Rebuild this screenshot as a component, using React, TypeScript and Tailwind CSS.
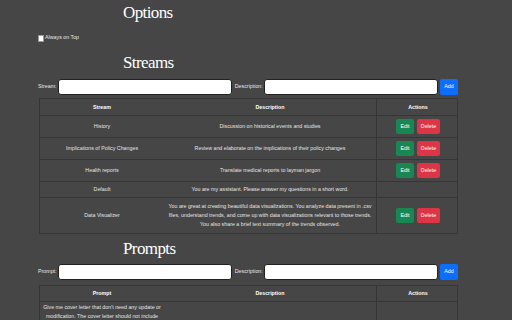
import React from 'react';

const sans = { fontFamily: '"Liberation Sans", Arial, sans-serif' };

type Stream = { name: string; lines: string[]; actions: boolean; h: string };

const streams: Stream[] = [
  { name: 'History', lines: ['Discussion on historical events and studies'], actions: true, h: 'h-[22px]' },
  { name: 'Implications of Policy Changes', lines: ['Review and elaborate on the implications of their policy changes'], actions: true, h: 'h-[22px]' },
  { name: 'Health reports', lines: ['Translate medical reports to layman jargon'], actions: true, h: 'h-[22px]' },
  { name: 'Default', lines: ['You are my assistant. Please answer my questions in a short word.'], actions: false, h: 'h-[16px]' },
  {
    name: 'Data Visualizer',
    lines: [
      'You are great at creating beautiful data visualizations. You analyze data present in .csv',
      'files, understand trends, and come up with data visualizations relevant to those trends.',
      'You also share a brief text summary of the trends observed.',
    ],
    actions: true,
    h: 'h-[36px]',
  },
];

function Title({ children }: { children: React.ReactNode }) {
  return (
    <div
      className="pl-[85px] text-[17px] leading-[17px] tracking-[-0.6px] text-white"
      style={{ fontFamily: '"Liberation Serif", "Times New Roman", serif' }}
    >
      {children}
    </div>
  );
}

function InputRow({ label }: { label: string }) {
  return (
    <div className="flex h-[16px] items-stretch gap-[1px] text-[5.3px] text-[#e6e6e6]">
      <span className="flex items-center">{label}:</span>
      <div className="flex-1 rounded-[3px] border border-[#222] bg-white" />
      <span className="ml-[2px] flex items-center">Description:</span>
      <div className="flex-1 rounded-[3px] border border-[#222] bg-white" />
      <button className="ml-[1px] w-[18px] rounded-[2px] bg-[#0d6efd] text-[5.3px] text-white">Add</button>
    </div>
  );
}

function Row({ h, header, children }: { h: string; header?: boolean; children: React.ReactNode[] }) {
  return (
    <div className={`grid grid-cols-[124px_212px_83px] border-b border-[#363636] ${h} ${header ? 'font-bold text-white' : 'text-[#e4e4e4]'}`}>
      <div className="flex items-center justify-center text-center">{children[0]}</div>
      <div className="flex items-center justify-center text-center">{children[1]}</div>
      <div className="flex items-center justify-center gap-[3px] border-l border-[#363636]">{children[2]}</div>
    </div>
  );
}

function Actions() {
  return (
    <>
      <button className="h-[15px] w-[18px] rounded-[2px] bg-[#198754] text-white">Edit</button>
      <button className="h-[15px] w-[23px] rounded-[2px] bg-[#dc3545] text-white">Delete</button>
    </>
  );
}

export default function App() {
  return (
    <div className="h-[320px] w-[512px] overflow-hidden bg-[#464646]" style={sans}>
      <div className="ml-[38px] w-[420px]">
        <div className="pt-[4px]">
          <Title>Options</Title>
        </div>
        <div className="mt-[13px] flex h-[8px] items-center gap-[1px] text-[5.3px] text-[#e6e6e6]">
          <span className="h-[7px] w-[6px] border border-[#999] bg-white" />
          <span>Always on Top</span>
        </div>
        <div className="mt-[12px]">
          <Title>Streams</Title>
        </div>
        <div className="mt-[8px]">
          <InputRow label="Stream" />
        </div>
        <div className="ml-[1px] mt-[3px] border-x border-t border-[#363636] text-[5.3px] leading-[9px]">
          <Row h="h-[17px]" header>
            {['Stream', 'Description', 'Actions']}
          </Row>
          {streams.map((s) => (
            <Row key={s.name} h={s.h}>
              {[
                s.name,
                <div className="whitespace-nowrap">
                  {s.lines.map((l) => (
                    <div key={l}>{l}</div>
                  ))}
                </div>,
                s.actions ? <Actions /> : null,
              ]}
            </Row>
          ))}
        </div>
        <div className="mt-[6px]">
          <Title>Prompts</Title>
        </div>
        <div className="mt-[7px]">
          <InputRow label="Prompt" />
        </div>
        <div className="ml-[1px] mt-[5px] border-x border-t border-[#363636] text-[5.3px] leading-[9px]">
          <Row h="h-[16px]" header>
            {['Prompt', 'Description', 'Actions']}
          </Row>
          <Row h="h-[40px]">
            {[
              <div className="self-start pt-[1px] whitespace-nowrap">
                <div>Give me cover letter that don't need any update or</div>
                <div>modification. The cover letter should not include</div>
              </div>,
              null,
              null,
            ]}
          </Row>
        </div>
      </div>
    </div>
  );
}
